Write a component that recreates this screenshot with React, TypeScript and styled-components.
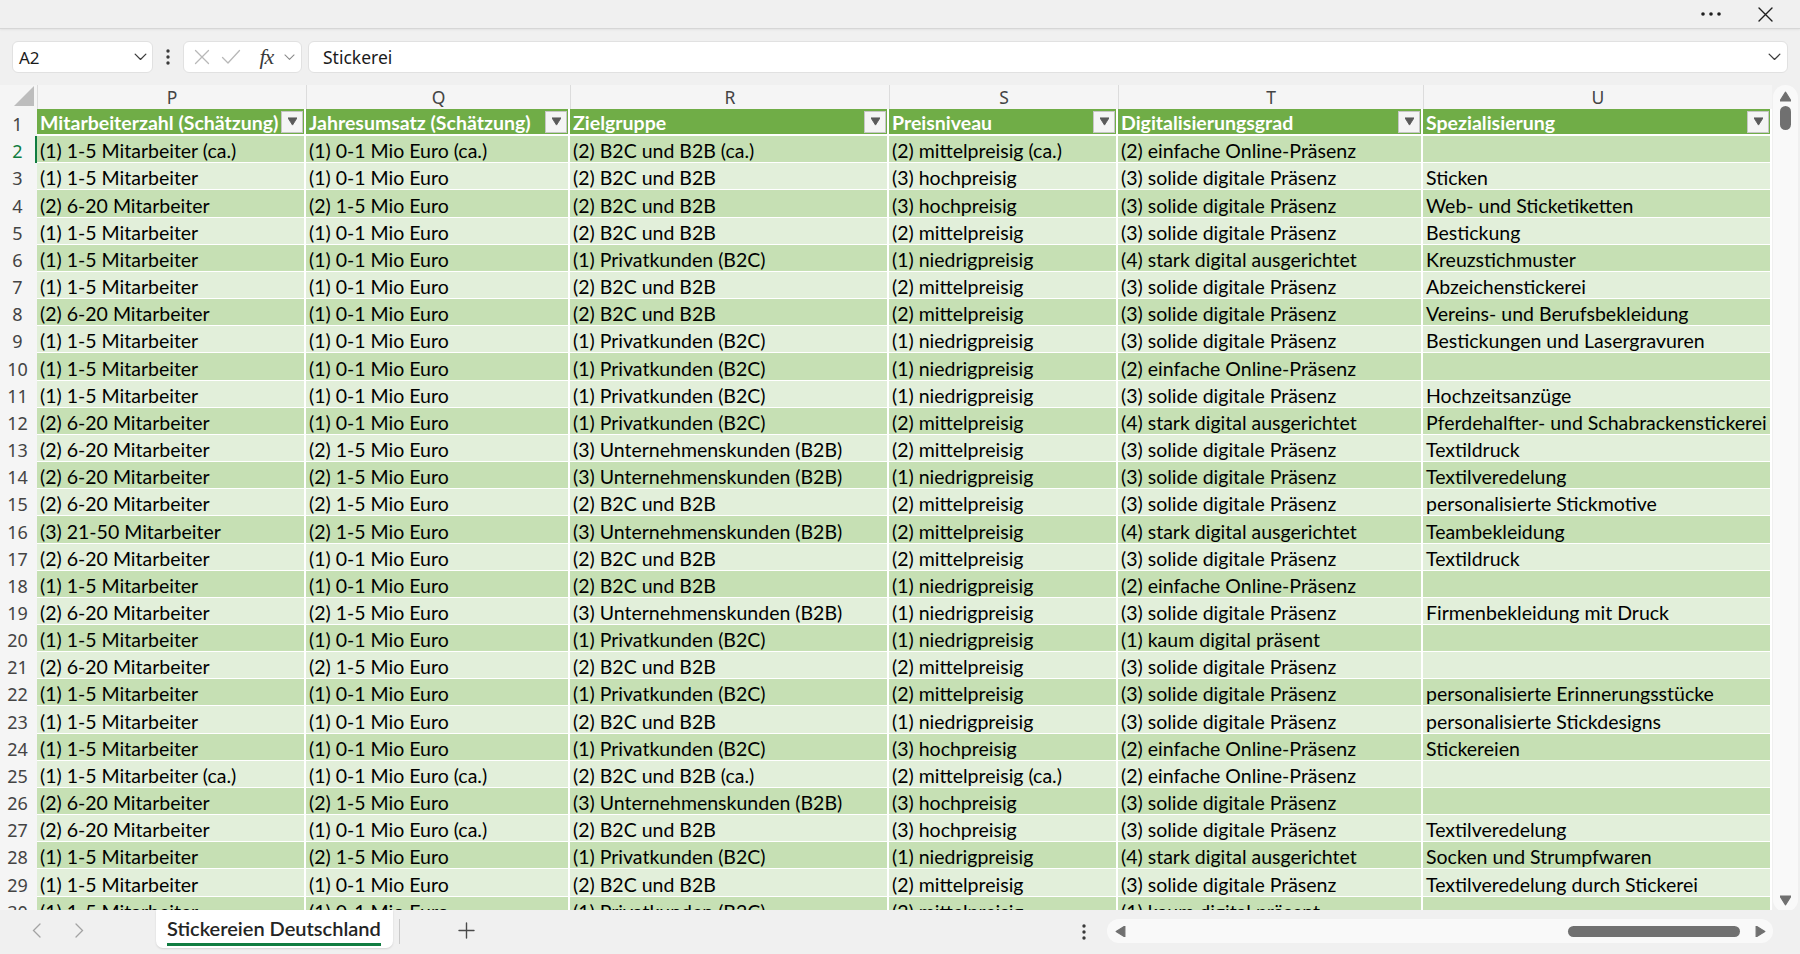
import React from "react";
import styled, { createGlobalStyle } from "styled-components";

const GlobalStyle = createGlobalStyle`
  html, body { margin: 0; padding: 0; background: #f0f0f0; }
  body { font-family: "Noto Sans", "Open Sans", sans-serif; }
  *, *::before, *::after { box-sizing: border-box; }
`;

const COLS = "37px 269px 264px 319px 229px 305px 349px";
const ROW_H = 27.17;
const CELL_FONT = `"Lato", "Open Sans", sans-serif`;

type RowData = [string, string, string, string, string, string];

const headers = [
  "Mitarbeiterzahl (Schätzung)",
  "Jahresumsatz (Schätzung)",
  "Zielgruppe",
  "Preisniveau",
  "Digitalisierungsgrad",
  "Spezialisierung",
];

const letters = ["P", "Q", "R", "S", "T", "U"];

const M1 = "(1) 1-5 Mitarbeiter";
const M2 = "(2) 6-20 Mitarbeiter";
const E1 = "(1) 0-1 Mio Euro";
const E2 = "(2) 1-5 Mio Euro";
const B2 = "(2) B2C und B2B";
const PK = "(1) Privatkunden (B2C)";
const UK = "(3) Unternehmenskunden (B2B)";
const NP = "(1) niedrigpreisig";
const MP = "(2) mittelpreisig";
const HP = "(3) hochpreisig";
const D1 = "(1) kaum digital präsent";
const D2 = "(2) einfache Online-Präsenz";
const D3 = "(3) solide digitale Präsenz";
const D4 = "(4) stark digital ausgerichtet";

const rows: RowData[] = [
  ["(1) 1-5 Mitarbeiter (ca.)", "(1) 0-1 Mio Euro (ca.)", "(2) B2C und B2B (ca.)", "(2) mittelpreisig (ca.)", D2, ""],
  [M1, E1, B2, HP, D3, "Sticken"],
  [M2, E2, B2, HP, D3, "Web- und Sticketiketten"],
  [M1, E1, B2, MP, D3, "Bestickung"],
  [M1, E1, PK, NP, D4, "Kreuzstichmuster"],
  [M1, E1, B2, MP, D3, "Abzeichenstickerei"],
  [M2, E1, B2, MP, D3, "Vereins- und Berufsbekleidung"],
  [M1, E1, PK, NP, D3, "Bestickungen und Lasergravuren"],
  [M1, E1, PK, NP, D2, ""],
  [M1, E1, PK, NP, D3, "Hochzeitsanzüge"],
  [M2, E1, PK, MP, D4, "Pferdehalfter- und Schabrackenstickerei"],
  [M2, E2, UK, MP, D3, "Textildruck"],
  [M2, E2, UK, NP, D3, "Textilveredelung"],
  [M2, E2, B2, MP, D3, "personalisierte Stickmotive"],
  ["(3) 21-50 Mitarbeiter", E2, UK, MP, D4, "Teambekleidung"],
  [M2, E1, B2, MP, D3, "Textildruck"],
  [M1, E1, B2, NP, D2, ""],
  [M2, E2, UK, NP, D3, "Firmenbekleidung mit Druck"],
  [M1, E1, PK, NP, D1, ""],
  [M2, E2, B2, MP, D3, ""],
  [M1, E1, PK, MP, D3, "personalisierte Erinnerungsstücke"],
  [M1, E1, B2, NP, D3, "personalisierte Stickdesigns"],
  [M1, E1, PK, HP, D2, "Stickereien"],
  ["(1) 1-5 Mitarbeiter (ca.)", "(1) 0-1 Mio Euro (ca.)", "(2) B2C und B2B (ca.)", "(2) mittelpreisig (ca.)", D2, ""],
  [M2, E2, UK, HP, D3, ""],
  [M2, "(1) 0-1 Mio Euro (ca.)", B2, HP, D3, "Textilveredelung"],
  [M1, E2, PK, NP, D4, "Socken und Strumpfwaren"],
  [M1, E1, B2, MP, D3, "Textilveredelung durch Stickerei"],
  [M1, E1, PK, MP, D1, ""],
];

/* ---------- window chrome ---------- */

const Window = styled.div`
  width: 1800px;
  height: 954px;
  display: flex;
  flex-direction: column;
  background: #f0f0f0;
  overflow: hidden;
`;

const TitleBar = styled.div`
  height: 29px;
  flex: none;
  display: flex;
  align-items: center;
  justify-content: flex-end;
  gap: 22px;
  padding-right: 19px;
  border-bottom: 1px solid #d6d6d6;
  box-shadow: 0 1px 2px rgba(0, 0, 0, 0.06);
`;

const TitleIcon = styled.span`
  display: flex;
  align-items: center;
  justify-content: center;
  width: 32px;
  height: 24px;
  color: #1f1f1f;
`;

const FormulaBar = styled.div`
  flex: none;
  height: 56px;
  display: flex;
  align-items: center;
  padding: 0 12px 0 12px;
`;

const FieldBox = styled.div`
  height: 32px;
  background: #ffffff;
  border: 1px solid #e1e1e1;
  border-radius: 6px;
  display: flex;
  align-items: center;
`;

const NameBox = styled(FieldBox)`
  width: 141px;
  padding: 0 5px 0 6px;
  justify-content: space-between;
  font-size: 17px;
  color: #1b1b1b;
`;

const MoreHandle = styled.div`
  width: 30px;
  display: flex;
  justify-content: center;
  color: #3a3a3a;
`;

const FxGroup = styled(FieldBox)`
  width: 119px;
  padding: 0 6px 0 10px;
  justify-content: space-between;
`;

const FxText = styled.span`
  font-family: "Liberation Serif", "DejaVu Serif", serif;
  font-style: italic;
  font-size: 22px;
  color: #3b3b3b;
  letter-spacing: -1px;
  margin-left: 8px;
  line-height: 1;
`;

const FormulaInput = styled(FieldBox)`
  flex: 1;
  margin-left: 6px;
  padding: 0 6px 0 14px;
  justify-content: space-between;
  font-size: 17.5px;
  color: #1b1b1b;
`;

/* ---------- sheet ---------- */

const SheetArea = styled.div`
  flex: 1;
  min-height: 0;
  display: flex;
`;

const Sheet = styled.div`
  width: 1772px;
  flex: none;
  overflow: hidden;
  background: #f0f0f0;
`;

const GridRow = styled.div<{ $h: number }>`
  display: grid;
  grid-template-columns: ${COLS};
  height: ${(p) => p.$h}px;
`;

const Corner = styled.div`
  background: #f5f5f5;
  display: flex;
  align-items: flex-end;
  justify-content: flex-end;
  padding: 0 3px 3px 0;
  border-bottom: 1px solid #dadada;
`;

const ColLetter = styled.div`
  background: #f5f5f5;
  border-left: 1px solid #dcdcdc;
  border-bottom: 1px solid #dadada;
  display: flex;
  align-items: center;
  justify-content: center;
  font-size: 17.5px;
  color: #444444;
`;

const RowNumber = styled.div<{ $selected?: boolean }>`
  background: #f5f5f5;
  display: flex;
  align-items: flex-end;
  justify-content: center;
  padding-bottom: 1px;
  font-size: 18px;
  line-height: 22px;
  color: ${(p) => (p.$selected ? "#107c41" : "#444444")};
  border-right: 2px solid ${(p) => (p.$selected ? "#107c41" : "#f5f5f5")};
`;

const HeadCell = styled.div`
  background: #70ad47;
  border-right: 2px solid #ffffff;
  border-bottom: 2px solid #ffffff;
  display: flex;
  align-items: center;
  justify-content: space-between;
  padding: 0 1px 0 3px;
  font-family: ${CELL_FONT};
  font-weight: 700;
  font-size: 19.5px;
  color: #ffffff;
  white-space: nowrap;
  overflow: hidden;
`;

const HeadLabel = styled.span`
  padding-top: 1px;
`;

const FilterButton = styled.span`
  flex: none;
  width: 22px;
  height: 22px;
  background: #f4f4f4;
  border: 1px solid #c6c6c6;
  display: flex;
  align-items: center;
  justify-content: center;
`;

const DataCell = styled.div<{ $dark: boolean }>`
  background: ${(p) => (p.$dark ? "#c6e0b4" : "#e2efda")};
  border-right: 2px solid #ffffff;
  border-bottom: 1px solid #ffffff;
  display: flex;
  align-items: flex-end;
  padding: 0 3px 0 3px;
  font-family: ${CELL_FONT};
  font-size: 19.5px;
  line-height: 22px;
  color: #000000;
  white-space: nowrap;
  overflow: hidden;
`;

/* ---------- vertical scrollbar ---------- */

const VScrollTrack = styled.div`
  width: 28px;
  flex: none;
  padding: 0 2px 0 1px;
  display: flex;
`;

const VScrollPill = styled.div`
  flex: 1;
  margin-bottom: -2px;
  background: #f9f9f9;
  border-radius: 13px;
  display: flex;
  flex-direction: column;
  align-items: center;
  padding: 6px 0 6px;
`;

const VThumb = styled.div`
  width: 11px;
  height: 24px;
  border-radius: 6px;
  background: #707070;
  margin-top: 4px;
`;

const Grow = styled.div`
  flex: 1;
`;

/* ---------- bottom bar ---------- */

const BottomBar = styled.div`
  flex: none;
  height: 44px;
  display: flex;
  align-items: flex-start;
  background: #f0f0f0;
`;

const NavArrows = styled.div`
  width: 156px;
  height: 40px;
  display: flex;
  align-items: center;
  padding-left: 32px;
  gap: 34px;
  color: #a3a3a3;
`;

const SheetTab = styled.div`
  width: 237px;
  height: 38px;
  background: #ffffff;
  border-radius: 0 0 7px 7px;
  box-shadow: 0 1px 2px rgba(0, 0, 0, 0.12);
  padding: 0 12px 0 11px;
  display: flex;
  align-items: center;
`;

const TabLabel = styled.span`
  font-family: ${CELL_FONT};
  font-size: 20px;
  font-weight: 600;
  color: #242424;
  padding-bottom: 2px;
  border-bottom: 3px solid #107c41;
  line-height: 26px;
  margin-top: 3px;
  white-space: nowrap;
`;

const TabDivider = styled.div`
  width: 1px;
  height: 25px;
  margin: 9px 0 0 6px;
  background: #c9c9c9;
`;

const AddSheet = styled.div`
  width: 132px;
  height: 40px;
  display: flex;
  align-items: center;
  justify-content: center;
  color: #4a4a4a;
`;

const Filler = styled.div`
  flex: 1;
`;

const HMore = styled.div`
  width: 30px;
  height: 44px;
  display: flex;
  align-items: center;
  justify-content: center;
  margin-right: 8px;
  color: #3a3a3a;
`;

const HScrollPill = styled.div`
  width: 666px;
  height: 24px;
  margin: 9px 27px 0 0;
  background: #f9f9f9;
  border-radius: 12px;
  display: flex;
  align-items: center;
  padding: 0 7px 0 8px;
`;

const HThumb = styled.div`
  width: 172px;
  height: 11px;
  border-radius: 6px;
  background: #707070;
  margin-right: 15px;
`;

/* ---------- icons ---------- */

const ChevronDown = ({ w = 13, color = "#3c3c3c" }: { w?: number; color?: string }) => (
  <svg width={w} height={w * 0.6} viewBox="0 0 13 8" fill="none">
    <path d="M1 1.2 L6.5 6.6 L12 1.2" stroke={color} strokeWidth="1.3" strokeLinecap="round" strokeLinejoin="round" />
  </svg>
);

const Triangle = ({ dir, size = 10, color = "#707070" }: { dir: "up" | "down" | "left" | "right"; size?: number; color?: string }) => {
  const pts = {
    up: "5,1 10,9 0,9",
    down: "0,1 10,1 5,9",
    left: "9,0 9,10 1,5",
    right: "1,0 1,10 9,5",
  }[dir];
  return (
    <svg width={size} height={size} viewBox="0 0 10 10">
      <polygon points={pts} fill={color} strokeLinejoin="round" stroke={color} strokeWidth="1" />
    </svg>
  );
};

const VDots = () => (
  <svg width="4" height="16" viewBox="0 0 4 16">
    <circle cx="2" cy="2" r="1.7" fill="currentColor" />
    <circle cx="2" cy="8" r="1.7" fill="currentColor" />
    <circle cx="2" cy="14" r="1.7" fill="currentColor" />
  </svg>
);

const App: React.FC = () => (
  <>
    <GlobalStyle />
    <Window>
      <TitleBar>
        <TitleIcon>
          <svg width="20" height="4" viewBox="0 0 20 4">
            <circle cx="2" cy="2" r="1.8" fill="currentColor" />
            <circle cx="10" cy="2" r="1.8" fill="currentColor" />
            <circle cx="18" cy="2" r="1.8" fill="currentColor" />
          </svg>
        </TitleIcon>
        <TitleIcon>
          <svg width="15" height="15" viewBox="0 0 15 15">
            <path d="M1 1 L14 14 M14 1 L1 14" stroke="currentColor" strokeWidth="1.4" strokeLinecap="round" />
          </svg>
        </TitleIcon>
      </TitleBar>

      <FormulaBar>
        <NameBox>
          <span>A2</span>
          <ChevronDown />
        </NameBox>
        <MoreHandle>
          <VDots />
        </MoreHandle>
        <FxGroup>
          <svg width="16" height="16" viewBox="0 0 16 16">
            <path d="M1.5 1.5 L14.5 14.5 M14.5 1.5 L1.5 14.5" stroke="#b8b8b8" strokeWidth="1.3" strokeLinecap="round" />
          </svg>
          <svg width="20" height="16" viewBox="0 0 20 16">
            <path d="M1.5 8.5 L7 14 L18.5 1.5" fill="none" stroke="#b8b8b8" strokeWidth="1.3" strokeLinecap="round" strokeLinejoin="round" />
          </svg>
          <FxText>fx</FxText>
          <ChevronDown w={11} color="#8a8a8a" />
        </FxGroup>
        <FormulaInput>
          <span>Stickerei</span>
          <ChevronDown />
        </FormulaInput>
      </FormulaBar>

      <SheetArea>
        <Sheet>
          <GridRow $h={24}>
            <Corner>
              <svg width="20" height="20" viewBox="0 0 20 20">
                <polygon points="20,0 20,20 0,20" fill="#bdbdbd" />
              </svg>
            </Corner>
            {letters.map((l) => (
              <ColLetter key={l}>{l}</ColLetter>
            ))}
          </GridRow>

          <GridRow $h={ROW_H}>
            <RowNumber>1</RowNumber>
            {headers.map((h) => (
              <HeadCell key={h}>
                <HeadLabel>{h}</HeadLabel>
                <FilterButton>
                  <Triangle dir="down" size={9} color="#5a5a5a" />
                </FilterButton>
              </HeadCell>
            ))}
          </GridRow>

          {rows.map((r, i) => {
            const num = i + 2;
            return (
              <GridRow $h={ROW_H} key={num}>
                <RowNumber $selected={num === 2}>{num}</RowNumber>
                {r.map((v, c) => (
                  <DataCell key={c} $dark={num % 2 === 0}>
                    {v}
                  </DataCell>
                ))}
              </GridRow>
            );
          })}
        </Sheet>

        <VScrollTrack>
          <VScrollPill>
            <Triangle dir="up" size={11} />
            <VThumb />
            <Grow />
            <Triangle dir="down" size={11} />
          </VScrollPill>
        </VScrollTrack>
      </SheetArea>

      <BottomBar>
        <NavArrows>
          <svg width="9" height="15" viewBox="0 0 9 15">
            <path d="M8 1 L1.5 7.5 L8 14" fill="none" stroke="currentColor" strokeWidth="1.3" strokeLinecap="round" />
          </svg>
          <svg width="9" height="15" viewBox="0 0 9 15">
            <path d="M1 1 L7.5 7.5 L1 14" fill="none" stroke="currentColor" strokeWidth="1.3" strokeLinecap="round" />
          </svg>
        </NavArrows>
        <SheetTab>
          <TabLabel>Stickereien Deutschland</TabLabel>
        </SheetTab>
        <TabDivider />
        <AddSheet>
          <svg width="17" height="17" viewBox="0 0 17 17">
            <path d="M8.5 1 V16 M1 8.5 H16" stroke="currentColor" strokeWidth="1.4" strokeLinecap="round" />
          </svg>
        </AddSheet>
        <Filler />
        <HMore>
          <VDots />
        </HMore>
        <HScrollPill>
          <Triangle dir="left" size={11} />
          <Grow />
          <HThumb />
          <Triangle dir="right" size={11} />
        </HScrollPill>
      </BottomBar>
    </Window>
  </>
);

export default App;
